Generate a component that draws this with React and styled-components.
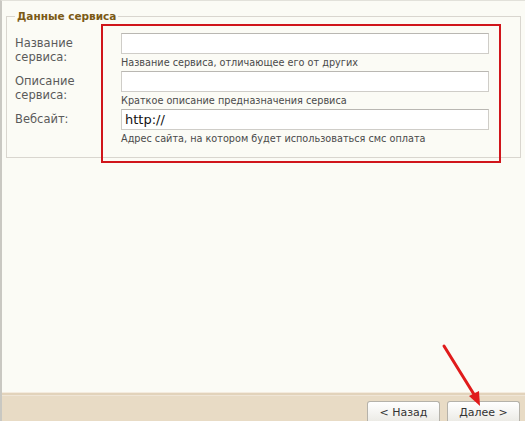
import React from 'react';
import styled, { createGlobalStyle } from 'styled-components';

const GlobalStyle = createGlobalStyle`
  html, body {
    margin: 0;
    padding: 0;
    background: #fbfbf5;
  }
  body {
    font-family: 'DejaVu Sans', Verdana, sans-serif;
  }
`;

const Window = styled.div`
  position: relative;
  width: 525px;
  height: 421px;
  box-sizing: border-box;
  border-left: 2px solid #c9c8c2;
  border-top: 1px solid #e2e1da;
  background: #fbfbf5;
  display: flex;
  flex-direction: column;
  overflow: hidden;
`;

const Body = styled.div`
  flex: 1;
  padding: 9px 4px 0 4px;
`;

const Fieldset = styled.fieldset`
  margin: 0;
  padding: 11px 0 0 8px;
  border: 1px solid #d9d6cf;
  box-sizing: border-box;
  height: 148px;
`;

const Legend = styled.legend`
  padding: 0 2px;
  margin-left: 0;
  font-size: 10.5px;
  font-weight: bold;
  color: #7b5a17;
`;

const Row = styled.div`
  display: grid;
  grid-template-columns: 106px 368px;
  height: 38px;
`;

const Label = styled.div`
  font-size: 11.5px;
  line-height: 14px;
  color: #5a5a5a;
  padding-top: 3px;
`;

const Field = styled.div`
  display: flex;
  flex-direction: column;
`;

const Input = styled.div`
  height: 21px;
  box-sizing: border-box;
  background: #fff;
  border: 1px solid #cfcdc8;
  border-top-color: #b9b7b2;
  font-size: 13px;
  line-height: 19px;
  color: #111;
  padding-left: 3px;
`;

const Hint = styled.div`
  font-size: 9.7px;
  color: #4a4a4a;
  margin-top: 3px;
  line-height: 12px;
`;

const Highlight = styled.div`
  position: absolute;
  left: 99px;
  top: 23px;
  width: 400px;
  height: 139px;
  box-sizing: border-box;
  border: 2.5px solid #d0151b;
  pointer-events: none;
`;

const Footer = styled.div`
  height: 29px;
  box-sizing: border-box;
  background: #e8dbc5;
  border-top: 1px solid #f4ebde;
  box-shadow: inset 0 2px 0 #e2d3bb, inset 0 3px 0 #efe5d6;
  display: flex;
  justify-content: flex-end;
  align-items: flex-end;
  gap: 7px;
  padding-right: 5px;
`;

const Button = styled.button`
  width: 73px;
  height: 20px;
  box-sizing: border-box;
  border: 1px solid #b5b2aa;
  border-bottom: none;
  background: linear-gradient(#ffffff, #ecebe6);
  font-family: 'DejaVu Sans', Verdana, sans-serif;
  font-size: 11px;
  color: #333;
  padding: 2px 0 0;
  border-radius: 3px 3px 0 0;
`;

const Arrow = styled.svg`
  position: absolute;
  left: 430px;
  top: 335px;
  pointer-events: none;
`;

const rows = [
  { label: ['Название', 'сервиса:'], value: '', hint: 'Название сервиса, отличающее его от других' },
  { label: ['Описание', 'сервиса:'], value: '', hint: 'Краткое описание предназначения сервиса' },
  { label: ['Вебсайт:'], value: 'http://', hint: 'Адрес сайта, на котором будет использоваться смс оплата' },
];

export default function App() {
  return (
    <>
      <GlobalStyle />
      <Window>
        <Body>
          <Fieldset>
            <Legend>Данные сервиса</Legend>
            {rows.map((r, i) => (
              <Row key={i}>
                <Label>
                  {r.label.map((l) => (
                    <div key={l}>{l}</div>
                  ))}
                </Label>
                <Field>
                  <Input>{r.value}</Input>
                  <Hint>{r.hint}</Hint>
                </Field>
              </Row>
            ))}
          </Fieldset>
        </Body>
        <Footer>
          <Button>&lt; Назад</Button>
          <Button>Далее &gt;</Button>
        </Footer>
        <Highlight />
        <Arrow width="60" height="80" viewBox="0 0 60 80">
          <line x1="12" y1="10" x2="43" y2="60" stroke="#e01b1b" strokeWidth="3" strokeLinecap="round" />
          <polygon points="48,70 37,60 47,55" fill="#e01b1b" />
        </Arrow>
      </Window>
    </>
  );
}
